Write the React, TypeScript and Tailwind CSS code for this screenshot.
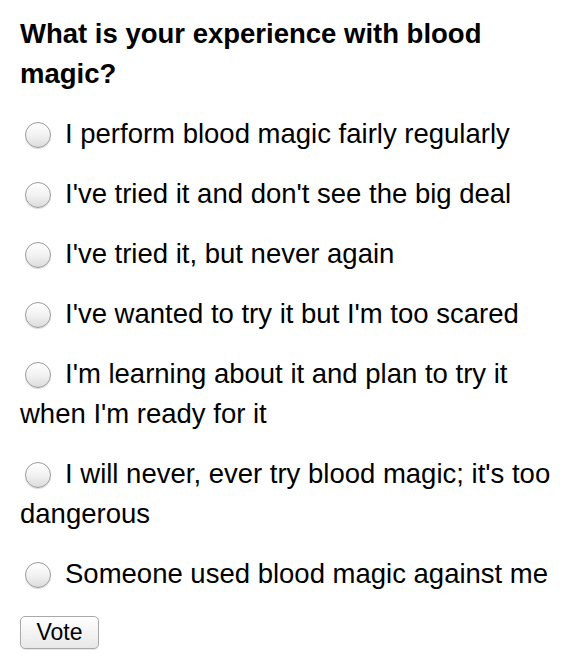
const options = [
  "I perform blood magic fairly regularly",
  "I've tried it and don't see the big deal",
  "I've tried it, but never again",
  "I've wanted to try it but I'm too scared",
  "I'm learning about it and plan to try it when I'm ready for it",
  "I will never, ever try blood magic; it's too dangerous",
  "Someone used blood magic against me",
];

function Radio() {
  return (
    <span className="inline-block align-[-5px] ml-[5px] mr-[14px] size-[26px] rounded-full border border-[#9a9a9a] bg-gradient-to-b from-[#ffffff] via-[#f2f2f2] to-[#dcdcdc] shadow-[inset_0_1px_1px_rgba(255,255,255,0.9),0_1px_1px_rgba(0,0,0,0.15)]" />
  );
}

export default function App() {
  return (
    <div className="w-[582px] h-[662px] bg-white px-[20px] pt-[14px] text-black font-['Liberation_Sans',Arial,sans-serif]">
      <p className="text-[27.5px] leading-[40px] font-bold mb-[20px]">What is your experience with blood magic?</p>
      {options.map((o) => (
        <p key={o} className="text-[27.5px] leading-[40px] mb-[20px]">
          <Radio />
          {o}
        </p>
      ))}
      <button className="h-[33px] w-[79px] rounded-[5px] border border-[#a9a9a9] bg-gradient-to-b from-[#ffffff] to-[#e8e8e8] text-[23px] leading-none shadow-[0_1px_1px_rgba(0,0,0,0.1)] mt-[2px]">
        Vote
      </button>
    </div>
  );
}
